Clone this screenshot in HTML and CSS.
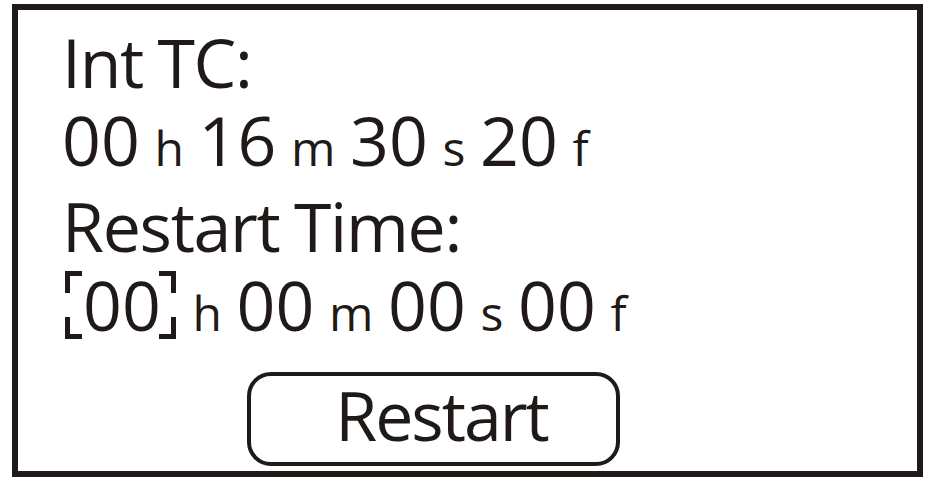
FILE: index.html
```html
<!DOCTYPE html>
<html>
<head>
<meta charset="utf-8">
<link rel="stylesheet" href="styles.css">
</head>
<body>
<div class="frame">
  <div class="row label r1">Int TC:</div>
  <div class="row r2">00 <span class="u">h</span> 16 <span class="u">m</span> 30 <span class="u">s</span> 20 <span class="u">f</span></div>
  <div class="row label r3">Restart Time:</div>
  <div class="row r4"><span class="sel">00</span> <span class="u">h</span> 00 <span class="u">m</span> 00 <span class="u">s</span> 00 <span class="u">f</span></div>
  <div class="btn">Restart</div>
</div>
</body>
</html>
```
FILE: styles.css
```css
html, body {
  margin: 0;
  padding: 0;
  background: #ffffff;
}
body {
  font-family: "Open Sans", "Noto Sans", sans-serif;
  color: #1f1a17;
}
.frame {
  box-sizing: border-box;
  width: 911px;
  height: 473px;
  margin: 4px 0 0 12px;
  border: 6px solid #1f1a17;
  padding: 19px 0 0 44px;
}
.row {
  font-size: 68px;
  line-height: 68px;
  height: 68px;
  white-space: nowrap;
  word-spacing: -3px;
}
.label {
  letter-spacing: -1.3px;
  word-spacing: -2px;
}
.r1 { margin-top: -1px; }
.r2 { margin-top: 10px; }
.r3 { margin-top: 18px; }
.r4 { margin-top: 11px; }
.u {
  font-size: 48px;
}
.r4 .sel {
  margin-left: 3px;
  margin-right: 2px;
}
.sel {
  display: inline-block;
  line-height: 68px;
  padding: 0 15px 0 18px;
  background:
    linear-gradient(#1f1a17, #1f1a17) left top / 17px 5px no-repeat,
    linear-gradient(#1f1a17, #1f1a17) left top / 5px 22px no-repeat,
    linear-gradient(#1f1a17, #1f1a17) right top / 17px 5px no-repeat,
    linear-gradient(#1f1a17, #1f1a17) right top / 5px 22px no-repeat,
    linear-gradient(#1f1a17, #1f1a17) left bottom / 17px 5px no-repeat,
    linear-gradient(#1f1a17, #1f1a17) left bottom / 5px 22px no-repeat,
    linear-gradient(#1f1a17, #1f1a17) right bottom / 17px 5px no-repeat,
    linear-gradient(#1f1a17, #1f1a17) right bottom / 5px 22px no-repeat;
}
.btn {
  box-sizing: border-box;
  width: 373px;
  height: 94px;
  margin: 33px 0 0 185px;
  border: 4px solid #1f1a17;
  border-radius: 24px;
  padding: 5px 0 0 16px;
  font-size: 68px;
  line-height: 68px;
  letter-spacing: -2px;
  text-align: center;
}
```
